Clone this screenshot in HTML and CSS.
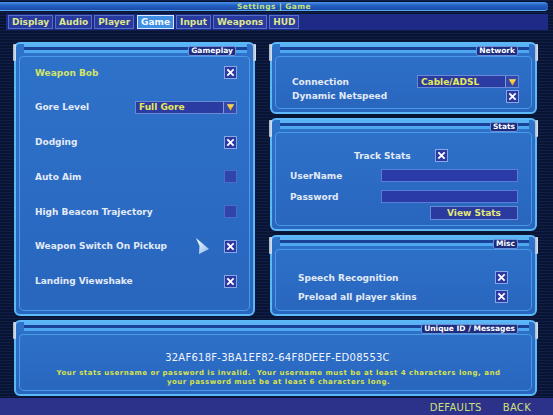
FILE: index.html
```html
<!DOCTYPE html>
<html>
<head>
<meta charset="utf-8">
<link rel="stylesheet" href="styles.css">
</head>
<body>
<div class="screen">
  <header class="titlebar"><span class="title">Settings | Game</span></header>
  <nav class="tabs">
    <span class="tab">Display</span>
    <span class="tab">Audio</span>
    <span class="tab">Player</span>
    <span class="tab active">Game</span>
    <span class="tab">Input</span>
    <span class="tab">Weapons</span>
    <span class="tab">HUD</span>
  </nav>

  <main class="main">
    <section class="panel gameplay">
      <div class="panel-head"><span class="panel-label">Gameplay</span></div>
      <div class="panel-body gameplay-body">
        <div class="row"><span class="lbl hl">Weapon Bob</span><span class="check on"><svg viewBox="0 0 13 13"><path d="M3.5 3.5l6 6M9.5 3.5l-6 6"/></svg></span></div>
        <div class="row"><span class="lbl">Gore Level</span><span class="combo gore"><span class="combo-text">Full Gore</span><span class="combo-btn"><svg viewBox="0 0 12 11"><defs><linearGradient id="ag" x1="0" y1="0" x2="0" y2="1"><stop offset="0" stop-color="#ffe45a"/><stop offset="1" stop-color="#e89a10"/></linearGradient></defs><path d="M2 2.5h8L6 9.5z" fill="url(#ag)"/></svg></span></span></div>
        <div class="row"><span class="lbl">Dodging</span><span class="check on"><svg viewBox="0 0 13 13"><path d="M3.5 3.5l6 6M9.5 3.5l-6 6"/></svg></span></div>
        <div class="row"><span class="lbl">Auto Aim</span><span class="check"></span></div>
        <div class="row"><span class="lbl">High Beacon Trajectory</span><span class="check"></span></div>
        <div class="row"><span class="lbl">Weapon Switch On Pickup</span><span class="check on"><svg viewBox="0 0 13 13"><path d="M3.5 3.5l6 6M9.5 3.5l-6 6"/></svg></span></div>
        <div class="row"><span class="lbl">Landing Viewshake</span><span class="check on"><svg viewBox="0 0 13 13"><path d="M3.5 3.5l6 6M9.5 3.5l-6 6"/></svg></span></div>
      </div>
    </section>

    <div class="rightcol">
      <section class="panel network">
        <div class="panel-head"><span class="panel-label">Network</span></div>
        <div class="panel-body network-body">
          <div class="row"><span class="lbl">Connection</span><span class="combo conn"><span class="combo-text">Cable/ADSL</span><span class="combo-btn"><svg viewBox="0 0 12 11"><path d="M2 2.5h8L6 9.5z" fill="url(#ag)"/></svg></span></span></div>
          <div class="row"><span class="lbl">Dynamic Netspeed</span><span class="check on"><svg viewBox="0 0 13 13"><path d="M3.5 3.5l6 6M9.5 3.5l-6 6"/></svg></span></div>
        </div>
      </section>

      <section class="panel stats">
        <div class="panel-head"><span class="panel-label">Stats</span></div>
        <div class="panel-body stats-body">
          <div class="track"><span class="lbl">Track Stats</span><span class="check on"><svg viewBox="0 0 13 13"><path d="M3.5 3.5l6 6M9.5 3.5l-6 6"/></svg></span></div>
          <div class="row field"><span class="lbl">UserName</span><span class="input"></span></div>
          <div class="row field pw"><span class="lbl">Password</span><span class="input"></span></div>
          <div class="btnrow"><span class="btn">View Stats</span></div>
        </div>
      </section>

      <section class="panel misc">
        <div class="panel-head"><span class="panel-label">Misc</span></div>
        <div class="panel-body misc-body">
          <div class="row"><span class="lbl">Speech Recognition</span><span class="check on"><svg viewBox="0 0 13 13"><path d="M3.5 3.5l6 6M9.5 3.5l-6 6"/></svg></span></div>
          <div class="row"><span class="lbl">Preload all player skins</span><span class="check on"><svg viewBox="0 0 13 13"><path d="M3.5 3.5l6 6M9.5 3.5l-6 6"/></svg></span></div>
        </div>
      </section>
    </div>
  </main>

  <section class="panel messages">
    <div class="panel-head"><span class="panel-label">Unique ID / Messages</span></div>
    <div class="panel-body msg-body">
      <div class="uid">32AF618F-3BA1EF82-64F8DEEF-ED08553C</div>
      <div class="msg">Your stats username or password is invalid.&nbsp; Your username must be at least 4 characters long, and<br>your password must be at least 6 characters long.</div>
    </div>
  </section>

  <footer class="footer">
    <span class="fbtn">DEFAULTS</span>
    <span class="fbtn">BACK</span>
  </footer>

  <svg class="cursor" width="16" height="19" viewBox="0 0 16 19"><defs><linearGradient id="cg" x1="0" y1="0" x2="1" y2="1"><stop offset="0" stop-color="#ffffff"/><stop offset="1" stop-color="#8ab8e8"/></linearGradient></defs><path d="M1 1L14 12L4 17L4.5 9z" fill="url(#cg)"/></svg>
</div>
</body>
</html>
```

FILE: styles.css
```css
* { box-sizing: border-box; }
html, body { margin: 0; padding: 0; }
body {
  width: 553px;
  height: 415px;
  overflow: hidden;
  background: repeating-linear-gradient(to bottom, #10204a 0 1px, #091433 1px 3px);
  font-family: "DejaVu Sans", Verdana, sans-serif;
}
.screen {
  position: relative;
  width: 553px;
  height: 415px;
}

/* title bar */
.titlebar {
  margin: 2px 5px 0 0;
  height: 9px;
  background: linear-gradient(to bottom, #4c92e6 0, #2462c6 40%, #1a4aa8 100%);
  border-bottom: 1px solid #5aa8f0;
  border-radius: 0 4px 4px 0;
  display: flex;
  justify-content: center;
  align-items: center;
}
.title {
  font-size: 7.5px;
  font-weight: bold;
  color: #c6e27a;
  letter-spacing: 0.45px;
}

/* tabs */
.tabs {
  margin: 3px 5px 0 6px;
  height: 16px;
  padding: 1px 2px;
  background: #1e2b86;
  display: flex;
  gap: 2px;
}
.tab {
  height: 14px;
  padding: 0 3px;
  border: 1px solid #5670c4;
  background: #283aa0;
  color: #dfe68c;
  font-size: 9px;
  font-weight: bold;
  display: flex;
  align-items: center;
}
.tab.active {
  background: #3f8fe2;
  border-color: #d8ecff;
  color: #f4f8ff;
  margin-left: 1px;
}

/* main grid */
.main {
  display: grid;
  grid-template-columns: 241px 267px;
  column-gap: 15px;
  margin: 12px 0 0 14px;
  height: 274px;
}
.rightcol {
  display: flex;
  flex-direction: column;
  gap: 4px;
}
.network { height: 72px; }
.stats { height: 113px; }
.misc { height: 81px; }

/* panel frame */
.panel {
  position: relative;
  display: flex;
  flex-direction: column;
  border: 2px solid #5cb8f8;
  border-radius: 6px;
  background: linear-gradient(to bottom, #2e72ca, #2966be);
  box-shadow: 0 0 0 1px #0a1838;
}
.panel::before,
.panel::after {
  content: "";
  position: absolute;
  top: 0;
  width: 3px;
  height: 17px;
  background: linear-gradient(to right, #a8b8d0, #dce6f2);
  border-radius: 1px;
}
.panel::before { left: -3px; }
.panel::after { right: -3px; }
.panel-head {
  height: 12px;
  flex: none;
  display: flex;
  justify-content: flex-end;
  align-items: center;
  padding-right: 11px;
  margin: 0 6px 0 8px;
  background: linear-gradient(to bottom,
    #5ab4f4 0 3px, #1a4298 3px 6px, #4ea8f0 6px 9px, transparent 9px);
}
.panel-label {
  height: 10px;
  margin-top: 1px;
  padding: 0 2px;
  background: #1c2d7e;
  border: 1px solid #6a8ed8;
  border-radius: 2px;
  color: #ffffff;
  font-size: 7.5px;
  font-weight: bold;
  display: flex;
  align-items: center;
}
.panel-body {
  flex: 1;
  margin: 0 3px 3px;
  border: 1px solid #4a9ae8;
  border-radius: 4px 4px 5px 5px;
  display: flex;
  flex-direction: column;
}

/* rows & controls */
.row {
  display: flex;
  justify-content: space-between;
  align-items: center;
  height: 13px;
}
.lbl {
  color: #e2eaf6;
  font-size: 9px;
  font-weight: bold;
}
.lbl.hl { color: #cfe46a; }
.check {
  width: 13px;
  height: 13px;
  flex: none;
  border: 1px solid #8aa6e4;
  background: #2a3aa2;
  display: flex;
}
.check svg {
  width: 11px;
  height: 11px;
  stroke: #ffffff;
  stroke-width: 2.2;
  stroke-linecap: square;
}
.check:not(.on) {
  background: #3044aa;
  border-color: #4c6ccc;
}
.combo {
  height: 13px;
  display: flex;
  border: 1px solid #6a8ad8;
  background: #2a3ca2;
}
.combo.gore { width: 102px; }
.combo.conn { width: 102px; }
.combo-text {
  flex: 1;
  color: #e8e85a;
  font-size: 9px;
  font-weight: bold;
  padding-left: 3px;
  display: flex;
  align-items: center;
}
.combo-btn {
  width: 13px;
  border-left: 1px solid #7a98dc;
  background: #3248aa;
  display: flex;
  align-items: center;
  justify-content: center;
}
.combo-btn svg { width: 11px; height: 10px; }

/* gameplay */
.gameplay-body {
  padding: 9px 12px 0 15px;
  gap: 21.8px;
}

/* network */
.network-body {
  padding: 18px 12px 0 16px;
  gap: 1.5px;
}

/* stats */
.stats-body {
  padding: 16px 13px 0 14px;
}
.track {
  display: flex;
  align-items: center;
  height: 13px;
  padding-left: 64px;
  gap: 24px;
}
.field { margin-top: 7px; }
.field.pw { margin-top: 8px; }
.input {
  width: 137px;
  height: 13px;
  background: #2a3aa6;
  border: 1px solid #5a7ed8;
}
.btnrow {
  display: flex;
  justify-content: flex-end;
  margin-top: 3px;
}
.btn {
  width: 88px;
  height: 14px;
  background: #2a3a9e;
  border: 1px solid #6a8ad8;
  color: #e2e87a;
  font-size: 9px;
  font-weight: bold;
  display: flex;
  align-items: center;
  justify-content: center;
}

/* misc */
.misc-body {
  padding: 21px 23px 0 22px;
  gap: 6px;
}

/* messages */
.messages {
  margin: 4px 16px 0 14px;
  height: 76px;
}
.msg-body {
  align-items: center;
  padding-top: 17px;
}
.uid {
  color: #f0f4fc;
  font-size: 10px;
  letter-spacing: 0.25px;
  line-height: 12px;
  margin-left: 4px;
}
.msg {
  margin-top: 5px;
  color: #d8e24a;
  font-size: 7px;
  font-weight: bold;
  letter-spacing: 0.5px;
  line-height: 9px;
  text-align: center;
  margin-left: 6px;
}

/* footer */
.footer {
  margin-top: 2px;
  height: 17px;
  background: #2c318a;
  display: flex;
  justify-content: flex-end;
  align-items: center;
  padding-right: 22px;
  gap: 21px;
}
.fbtn {
  color: #cfe07a;
  font-size: 10px;
  letter-spacing: 0.3px;
  padding-top: 1px;
}

/* mouse cursor over content */
.cursor {
  position: absolute;
  left: 195px;
  top: 235px;
}
```
